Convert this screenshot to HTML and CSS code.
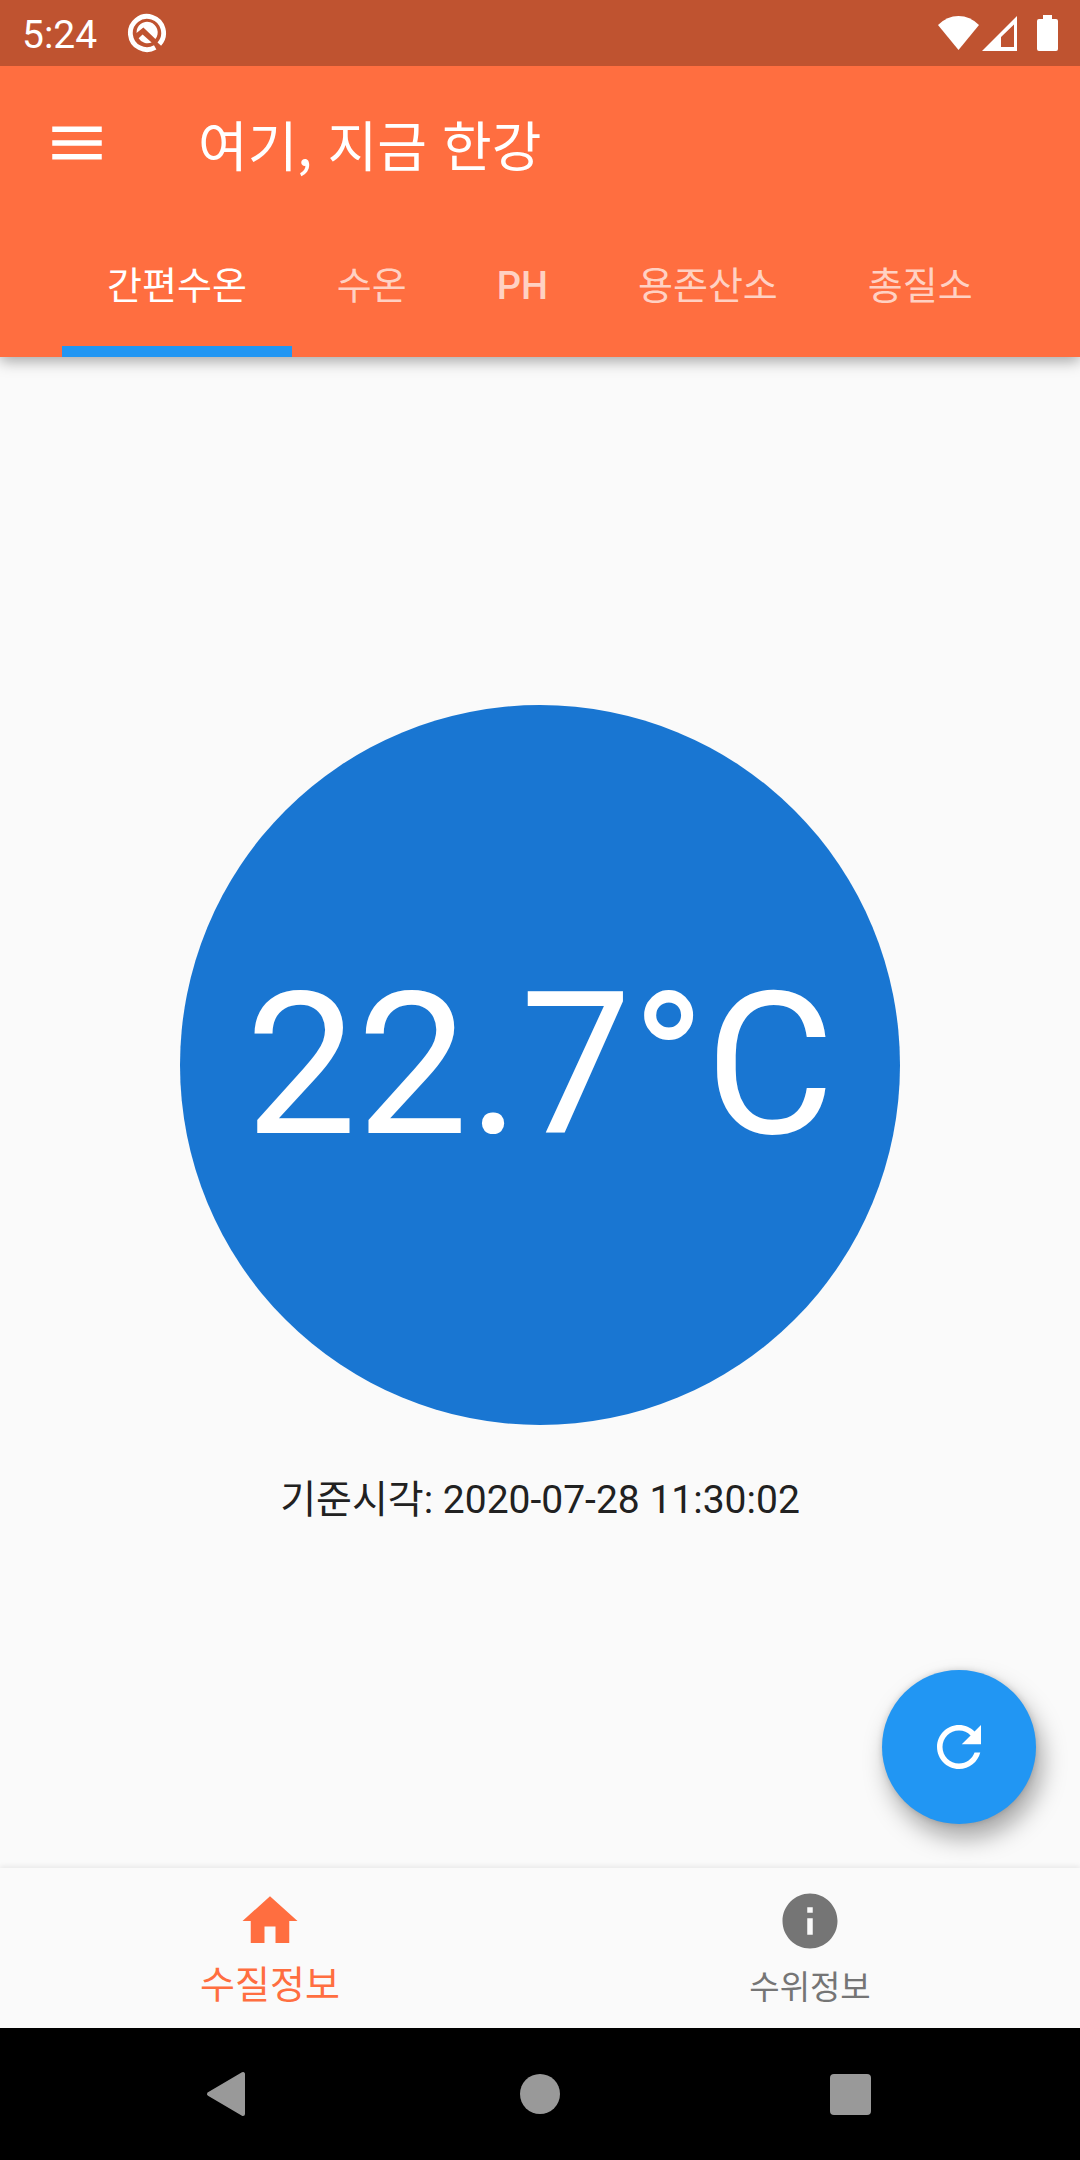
FILE: index.html
```html
<!DOCTYPE html>
<html lang="ko">
<head>
<meta charset="utf-8">
<meta name="viewport" content="width=device-width, initial-scale=1">
<title>여기, 지금 한강</title>
<link rel="stylesheet" href="styles.css">
</head>
<body>
<div class="app">
  <div class="status-bar">
    <span class="clock">5:24</span>
    <svg class="notice" viewBox="0 0 40 40" aria-hidden="true">
      <path d="M32.3 31.1A16.600 16.600 0 1 0 28.2 34.4" fill="none" stroke="#fff" stroke-width="4.8"/>
      <path d="M9.500 20A10.600 10.600 0 1 1 28.4 26L16.400 14.600Z" fill="#fff"/>
      <path d="M11.600 25.200L15.600 21.400L24.600 29.500A10.600 10.600 0 0 1 11.600 25.200Z" fill="#fff"/>
    </svg>
    <div class="signals">
      <svg class="wifi" viewBox="0 0 42 34" aria-hidden="true"><path d="M0 9Q9 0 20.5 0T41 9L20.5 34Z" fill="#fff"/></svg>
      <svg class="cell" viewBox="0 0 35 35" aria-hidden="true"><path fill-rule="evenodd" d="M0 35L35 0V35ZM19 21V31H32V8.500Z" fill="#fff"/></svg>
      <svg class="battery" viewBox="0 0 21 36" aria-hidden="true"><path d="M6 0H15V4H19Q21 4 21 6V34Q21 36 19 36H2Q0 36 0 34V6Q0 4 2 4H6Z" fill="#fff"/></svg>
    </div>
  </div>

  <header class="app-header">
    <div class="toolbar">
      <button class="menu-button" type="button" aria-label="메뉴">
        <svg class="icon" viewBox="0 0 24 24" aria-hidden="true"><path d="M3 18h18v-2H3v2zm0-5h18v-2H3v2zm0-7v2h18V6H3z"/></svg>
      </button>
      <h1 class="title">여기, 지금 한강</h1>
    </div>
    <nav class="tabs">
      <a class="tab tab-active" href="#simple" aria-current="page">간편수온</a>
      <a class="tab" href="#temp">수온</a>
      <a class="tab tab-latin" href="#ph">PH</a>
      <a class="tab" href="#oxygen">용존산소</a>
      <a class="tab" href="#nitrogen">총질소</a>
    </nav>
  </header>

  <main class="content">
    <div class="gauge">22.7°C</div>
    <p class="timestamp">기준시각: 2020-07-28 11:30:02</p>
    <button class="fab" type="button" aria-label="새로고침">
      <svg class="icon" viewBox="0 0 24 24" aria-hidden="true"><path d="M17.650 6.350C16.200 4.900 14.210 4 12 4c-4.420 0-7.990 3.580-7.990 8s3.570 8 7.990 8c3.730 0 6.840-2.550 7.730-6h-2.080c-.82 2.330-3.040 4-5.650 4-3.310 0-6-2.690-6-6s2.690-6 6-6c1.660 0 3.140.69 4.220 1.780L13 11h7V4l-2.350 2.350z"/></svg>
    </button>
  </main>

  <nav class="bottom-nav">
    <a class="nav-item nav-active" href="#quality" aria-current="page">
      <svg class="icon" viewBox="0 0 24 24" aria-hidden="true"><path d="M10 20v-6h4v6h5v-8h3L12 3 2 12h3v8z"/></svg>
      <span>수질정보</span>
    </a>
    <a class="nav-item" href="#level">
      <svg class="icon" viewBox="0 0 24 24" aria-hidden="true"><path d="M12 2C6.480 2 2 6.480 2 12s4.480 10 10 10 10-4.480 10-10S17.520 2 12 2zm1 15h-2v-6h2v6zm0-8h-2V7h2v2z"/></svg>
      <span>수위정보</span>
    </a>
  </nav>

  <div class="system-nav">
    <button class="system-button" type="button" aria-label="뒤로"><svg class="system-icon" viewBox="0 0 48 48" aria-hidden="true"><path d="M38 4V44L4 24Z" stroke="#999" stroke-width="4" stroke-linejoin="round"/></svg></button>
    <button class="system-button" type="button" aria-label="홈"><svg class="system-icon" viewBox="0 0 48 48" aria-hidden="true"><circle cx="24" cy="24" r="20"/></svg></button>
    <button class="system-button" type="button" aria-label="최근 앱"><svg class="system-icon" viewBox="0 0 48 48" aria-hidden="true"><rect x="3" y="4" width="41" height="41" rx="4"/></svg></button>
  </div>
</div>
</body>
</html>
```
FILE: styles.css
```css
* {
  box-sizing: border-box;
}

body {
  margin: 0;
  background: #fafafa;
  color: #212121;
  font-family: Roboto, "Noto Sans CJK KR", sans-serif;
  font-size: 39px;
}

button {
  display: flex;
  align-items: center;
  justify-content: center;
  padding: 0;
  border: 0;
  background: none;
  color: inherit;
}

a {
  color: inherit;
  text-decoration: none;
}

.app {
  display: flex;
  flex-direction: column;
  min-height: 100vh;
}

.icon {
  display: block;
  width: 66px;
  height: 66px;
  fill: currentColor;
}

/* Status bar */

.status-bar {
  position: relative;
  z-index: 1;
  display: flex;
  align-items: center;
  height: 66px;
  padding: 0 22px;
  background: #bf5330;
  color: #fff;
}

.clock {
  line-height: 64px;
  padding-top: 4px;
}

.notice {
  width: 40px;
  height: 40px;
  margin-left: 30px;
}

.signals {
  display: flex;
  align-items: center;
  margin-left: auto;
}

.wifi {
  width: 42px;
  height: 34px;
}

.cell {
  width: 35px;
  height: 35px;
  margin-left: 2px;
}

.battery {
  width: 21px;
  height: 36px;
  margin-left: 20px;
}

/* App header */

.app-header {
  position: relative;
  background: #ff6e40;
  color: #fff;
  box-shadow: 0 4px 14px rgba(0, 0, 0, 0.35);
}

.toolbar {
  display: flex;
  align-items: center;
  height: 154px;
  padding-left: 44px;
}

.menu-button {
  width: 66px;
  height: 66px;
}

.title {
  margin: 0 0 0 88px;
  padding-top: 2px;
  font-family: "Noto Sans CJK KR", sans-serif;
  font-size: 54px;
  font-weight: 400;
  line-height: 78px;
}

.tabs {
  display: flex;
  height: 137px;
  padding-left: 62px;
}

.tab {
  padding: 6px 45px 0;
  border-bottom: 11px solid transparent;
  color: rgba(255, 255, 255, 0.7);
  font-size: 38px;
  line-height: 120px;
}

.tab-active {
  border-bottom-color: #2196f3;
  color: #fff;
}

.tab-latin {
  font-weight: 500;
}

/* Reading */

.content {
  position: relative;
  display: flex;
  flex: 1;
  flex-direction: column;
  align-items: center;
  justify-content: center;
}

.gauge {
  display: flex;
  align-items: center;
  justify-content: center;
  width: 66.667%;
  aspect-ratio: 1;
  border-radius: 50%;
  background: #1976d2;
  color: #fff;
  font-size: 198px;
}

.timestamp {
  margin: 54px 0 0;
  line-height: 42px;
}

.fab {
  position: absolute;
  right: 44px;
  bottom: 44px;
  width: 154px;
  height: 154px;
  border-radius: 50%;
  background: #2196f3;
  color: #fff;
  box-shadow: 6px 14px 24px rgba(0, 0, 0, 0.34), 0 0 6px rgba(0, 0, 0, 0.15);
}

/* Bottom navigation */

.bottom-nav {
  display: flex;
  height: 160px;
  padding-top: 20px;
  background: #fafafa;
  box-shadow: 0 -2px 5px rgba(0, 0, 0, 0.07);
}

.nav-item {
  display: flex;
  flex: 1;
  flex-direction: column;
  align-items: center;
  color: #757575;
  font-size: 33px;
  line-height: 68px;
}

.nav-active {
  color: #ff6e40;
  font-size: 38px;
  line-height: 62px;
}

/* System navigation */

.system-nav {
  display: flex;
  justify-content: center;
  height: 132px;
  background: #000;
}

.system-button {
  width: 28.8%;
}

.system-icon {
  width: 48px;
  height: 48px;
  fill: #999;
}
```
